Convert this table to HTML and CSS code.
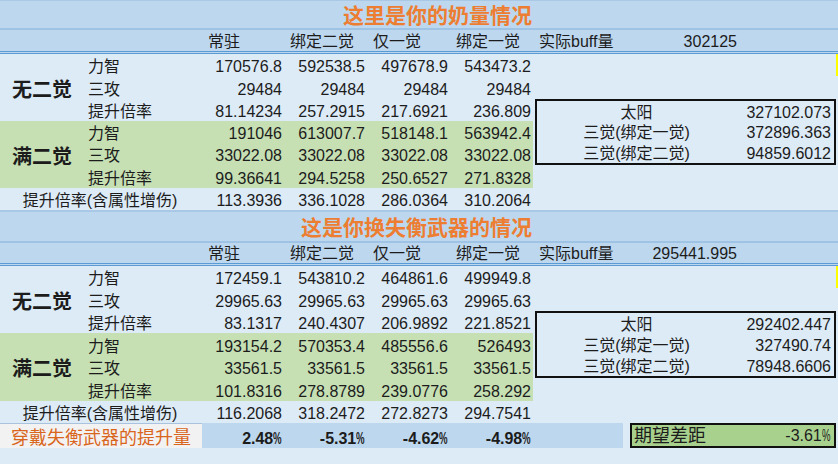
FILE: index.html
```html
<!DOCTYPE html>
<html lang="zh-CN">
<head>
<meta charset="utf-8">
<title>奶量情况</title>
<link rel="stylesheet" href="styles.css">
</head>
<body>
<div class="sheet">
  <section class="sec sec1">
    <div class="title"><span>这里是你的奶量情况</span></div>
    <div class="grid hdr">
      <div class="c h col3">常驻</div>
      <div class="c h">绑定二觉</div>
      <div class="c h">仅一觉</div>
      <div class="c h">绑定一觉</div>
      <div class="c h">实际buff量</div>
      <div class="c n hv">302125</div>
    </div>
    <div class="grid body">
      <div class="grp">无二觉</div>
      <div class="c l">力智</div><div class="c n">170576.8</div><div class="c n">592538.5</div><div class="c n">497678.9</div><div class="c n">543473.2</div>
      <div class="c l">三攻</div><div class="c n">29484</div><div class="c n">29484</div><div class="c n">29484</div><div class="c n">29484</div>
      <div class="c l">提升倍率</div><div class="c n">81.14234</div><div class="c n">257.2915</div><div class="c n">217.6921</div><div class="c n">236.809</div>
      <div class="grp g">满二觉</div>
      <div class="c l g">力智</div><div class="c n g">191046</div><div class="c n g">613007.7</div><div class="c n g">518148.1</div><div class="c n g">563942.4</div>
      <div class="c l g">三攻</div><div class="c n g">33022.08</div><div class="c n g">33022.08</div><div class="c n g">33022.08</div><div class="c n g">33022.08</div>
      <div class="c l g">提升倍率</div><div class="c n g">99.36641</div><div class="c n g">294.5258</div><div class="c n g">250.6527</div><div class="c n g">271.8328</div>
      <div class="c wide">提升倍率(含属性增伤)</div><div class="c n">113.3936</div><div class="c n">336.1028</div><div class="c n">286.0364</div><div class="c n">310.2064</div>
      <div class="box">
        <div class="c bl">太阳</div><div class="c n bv">327102.073</div>
        <div class="c bl">三觉(绑定一觉)</div><div class="c n bv">372896.363</div>
        <div class="c bl">三觉(绑定二觉)</div><div class="c n bv">94859.6012</div>
      </div>
      <div class="mark"></div>
    </div>
  </section>

  <section class="sec sec2">
    <div class="title"><span>这是你换失衡武器的情况</span></div>
    <div class="grid hdr">
      <div class="c h col3">常驻</div>
      <div class="c h">绑定二觉</div>
      <div class="c h">仅一觉</div>
      <div class="c h">绑定一觉</div>
      <div class="c h">实际buff量</div>
      <div class="c n hv">295441.995</div>
    </div>
    <div class="grid body">
      <div class="grp">无二觉</div>
      <div class="c l">力智</div><div class="c n">172459.1</div><div class="c n">543810.2</div><div class="c n">464861.6</div><div class="c n">499949.8</div>
      <div class="c l">三攻</div><div class="c n">29965.63</div><div class="c n">29965.63</div><div class="c n">29965.63</div><div class="c n">29965.63</div>
      <div class="c l">提升倍率</div><div class="c n">83.1317</div><div class="c n">240.4307</div><div class="c n">206.9892</div><div class="c n">221.8521</div>
      <div class="grp g">满二觉</div>
      <div class="c l g">力智</div><div class="c n g">193154.2</div><div class="c n g">570353.4</div><div class="c n g">485556.6</div><div class="c n g">526493</div>
      <div class="c l g">三攻</div><div class="c n g">33561.5</div><div class="c n g">33561.5</div><div class="c n g">33561.5</div><div class="c n g">33561.5</div>
      <div class="c l g">提升倍率</div><div class="c n g">101.8316</div><div class="c n g">278.8789</div><div class="c n g">239.0776</div><div class="c n g">258.292</div>
      <div class="c wide">提升倍率(含属性增伤)</div><div class="c n">116.2068</div><div class="c n">318.2472</div><div class="c n">272.8273</div><div class="c n">294.7541</div>
      <div class="c foot">穿戴失衡武器的提升量</div>
      <div class="c n pct">2.48<span class="pc">%</span></div>
      <div class="c n pct">-5.31<span class="pc">%</span></div>
      <div class="c n pct">-4.62<span class="pc">%</span></div>
      <div class="c n pct">-4.98<span class="pc">%</span></div>
      <div class="bluefill"></div>
      <div class="expect"><span>期望差距</span><span class="ev">-3.61<span class="pc">%</span></span></div>
      <div class="box">
        <div class="c bl">太阳</div><div class="c n bv">292402.447</div>
        <div class="c bl">三觉(绑定一觉)</div><div class="c n bv">327490.74</div>
        <div class="c bl">三觉(绑定二觉)</div><div class="c n bv">78948.6606</div>
      </div>
      <div class="mark"></div>
    </div>
  </section>
</div>
</body>
</html>
```

FILE: styles.css
```css
* { box-sizing: border-box; margin: 0; padding: 0; }
html, body { width: 838px; height: 464px; overflow: hidden; }
body {
  background: #ddebf7;
  font-family: "Liberation Sans", "Noto Sans CJK SC", sans-serif;
  font-size: 16px;
  color: #1c1c1c;
}
.grid {
  display: grid;
  grid-template-columns: 84px 118px 82px 83px 83px 83px 90px 116px 97px 2px;
}
.title {
  background: #bdd7ee;
  display: flex;
  justify-content: flex-end;
  padding-right: 306px;
  color: #ed7d31;
  font-family: "Noto Sans CJK SC", sans-serif;
  font-weight: 700;
  font-size: 21px;
  border-bottom: 2px solid #9fc3e5;
}
.sec1 .title { height: 30px; border-top: 1px solid #a8c8e6; line-height: 27px; }
.sec2 .title { height: 33px; border-top: 2px solid #a8c8e6; line-height: 29px; }
.hdr { background: #bdd7ee; border-bottom: 3px double #5b9bd5; }
.sec1 .hdr { height: 24px; }
.sec2 .hdr { height: 23px; }
.c {
  display: flex;
  align-items: flex-end;
  line-height: 16px;
  padding-bottom: 1px;
  white-space: nowrap;
}
.h { padding-left: 6px; }
.col3 { grid-column: 3; }
.hv { justify-content: flex-end; padding-right: 6px; }
.n { justify-content: flex-end; padding-right: 2px; }
.body > .l { grid-column: 2; padding-left: 4px; }
.sec1 .body { grid-template-rows: repeat(7, 22.29px); }
.sec2 .body { grid-template-rows: repeat(7, 22.43px) 25px; }
.grp {
  grid-column: 1;
  grid-row: span 3;
  display: flex;
  align-items: center;
  justify-content: center;
  font-family: "Noto Sans CJK SC", sans-serif;
  font-weight: 700;
  font-size: 20px;
  padding-top: 2px;
}
.g { background: #c6e0b4; }
.wide { grid-column: 1 / 3; justify-content: center; padding-right: 2px; }
.box {
  grid-column: 7 / 10;
  grid-row: 3 / 6;
  margin-left: 2px;
  border: 2px solid #111;
  display: grid;
  grid-template-columns: 1fr 96px;
  grid-template-rows: repeat(3, 1fr);
}
.bl { justify-content: center; padding-right: 2px; }
.bv { padding-right: 3px; }
.mark { grid-column: 10; grid-row: 1; background: #ffff00; }
.foot {
  grid-column: 1 / 3;
  justify-content: center;
  background: #f2f2f2;
  color: #d9661c;
  font-size: 18px;
  line-height: 18px;
  border-top: 1px solid #a9c3de;
}
.pct { background: #bdd7ee; font-weight: 700; }
.pc {
  display: inline-block;
  transform: scaleX(0.6);
  transform-origin: left bottom;
  margin-right: -5.5px;
}
.bluefill { background: #bdd7ee; }
.expect {
  grid-column: 8 / 10;
  margin-left: 7px;
  background: #a9d18e;
  border: 2px solid #111;
  display: flex;
  justify-content: space-between;
  align-items: flex-end;
  padding: 0 3px 1px 2px;
  line-height: 18px;
}
.expect > span:first-child { font-size: 18px; }
.ev { font-size: 16px; }
.ev .pc { margin-right: -5px; }
```
